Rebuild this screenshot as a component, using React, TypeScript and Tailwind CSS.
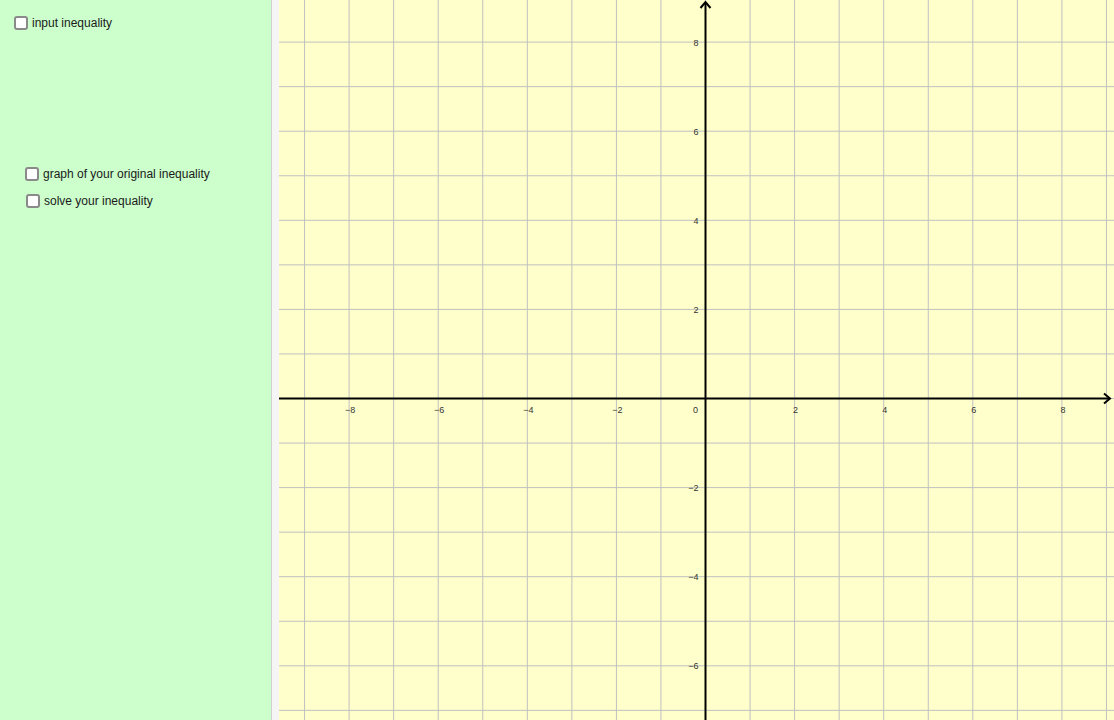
import React from 'react';

// Graph geometry (SVG coordinates, graph view starts at page x=279)
const W = 835;
const H = 720;
const OX = 426.5;
const OY = 398.5;
const U = 44.55;

const Checkbox = ({ label }: { label: string }) => (
  <label className="flex h-[14px] items-center gap-[4px] text-[12px] leading-none text-[#1a1a1a]">
    <span className="block h-[14px] w-[14px] shrink-0 rounded-[3px] border-2 border-[#8a8a8a] bg-white" />
    <span>{label}</span>
  </label>
);

const Graph = () => {
  const xs: number[] = [];
  for (let k = -10; k <= 10; k++) {
    const x = OX + k * U;
    if (x > 0 && x < W) xs.push(k);
  }
  const ys: number[] = [];
  for (let k = -10; k <= 10; k++) {
    const y = OY - k * U;
    if (y > 0 && y < H) ys.push(k);
  }

  return (
    <svg width={W} height={H} className="block">
      <rect width={W} height={H} fill="#ffffcc" />
      {/* grid */}
      {xs.map((k) => (
        <line key={'gx' + k} x1={OX + k * U} y1={0} x2={OX + k * U} y2={H} stroke="#c0c0c0" strokeWidth={1} />
      ))}
      {ys.map((k) => (
        <line key={'gy' + k} x1={0} y1={OY - k * U} x2={W} y2={OY - k * U} stroke="#c0c0c0" strokeWidth={1} />
      ))}

      {/* axes */}
      <line x1={0} y1={OY} x2={830} y2={OY} stroke="#000" strokeWidth={2} />
      <polyline points={`${825},${OY - 5} ${831},${OY} ${825},${OY + 5}`} fill="none" stroke="#000" strokeWidth={2} />
      <line x1={OX} y1={H} x2={OX} y2={3} stroke="#000" strokeWidth={2} />
      <polyline points={`${OX - 5},${8} ${OX},${2} ${OX + 5},${8}`} fill="none" stroke="#000" strokeWidth={2} />

      {/* labels */}
      <g fontFamily='"Liberation Sans", Arial, sans-serif' fontSize={9} fill="#333">
        {[-8, -6, -4, -2, 2, 4, 6, 8].map((k) => (
          <text key={'lx' + k} x={OX + k * U + 1} y={OY + 14} textAnchor="middle">
            {k < 0 ? '\u2212' + -k : k}
          </text>
        ))}
        <text x={OX - 10} y={OY + 14} textAnchor="middle">0</text>
        {[8, 6, 4, 2, -2, -4, -6].map((k) => (
          <text key={'ly' + k} x={OX - 7} y={OY - k * U + 3.5} textAnchor="end">
            {k < 0 ? '\u2212' + -k : k}
          </text>
        ))}
      </g>
    </svg>
  );
};

export default function App() {
  return (
    <div className="flex h-[720px] w-[1114px] overflow-hidden font-['Liberation_Sans',Arial,sans-serif]">
      <div className="flex w-[271px] shrink-0 flex-col bg-[#ccffcc] pl-[14px] pt-[16px]">
        <Checkbox label="input inequality" />
        <div className="ml-[11px] mt-[137px]">
          <Checkbox label="graph of your original inequality" />
        </div>
        <div className="ml-[12px] mt-[13px]">
          <Checkbox label="solve your inequality" />
        </div>
      </div>
      <div className="w-[8px] shrink-0 border-l border-[#d0d0d0] bg-[#f5f5f5]" />
      <div className="flex-1">
        <Graph />
      </div>
    </div>
  );
}
